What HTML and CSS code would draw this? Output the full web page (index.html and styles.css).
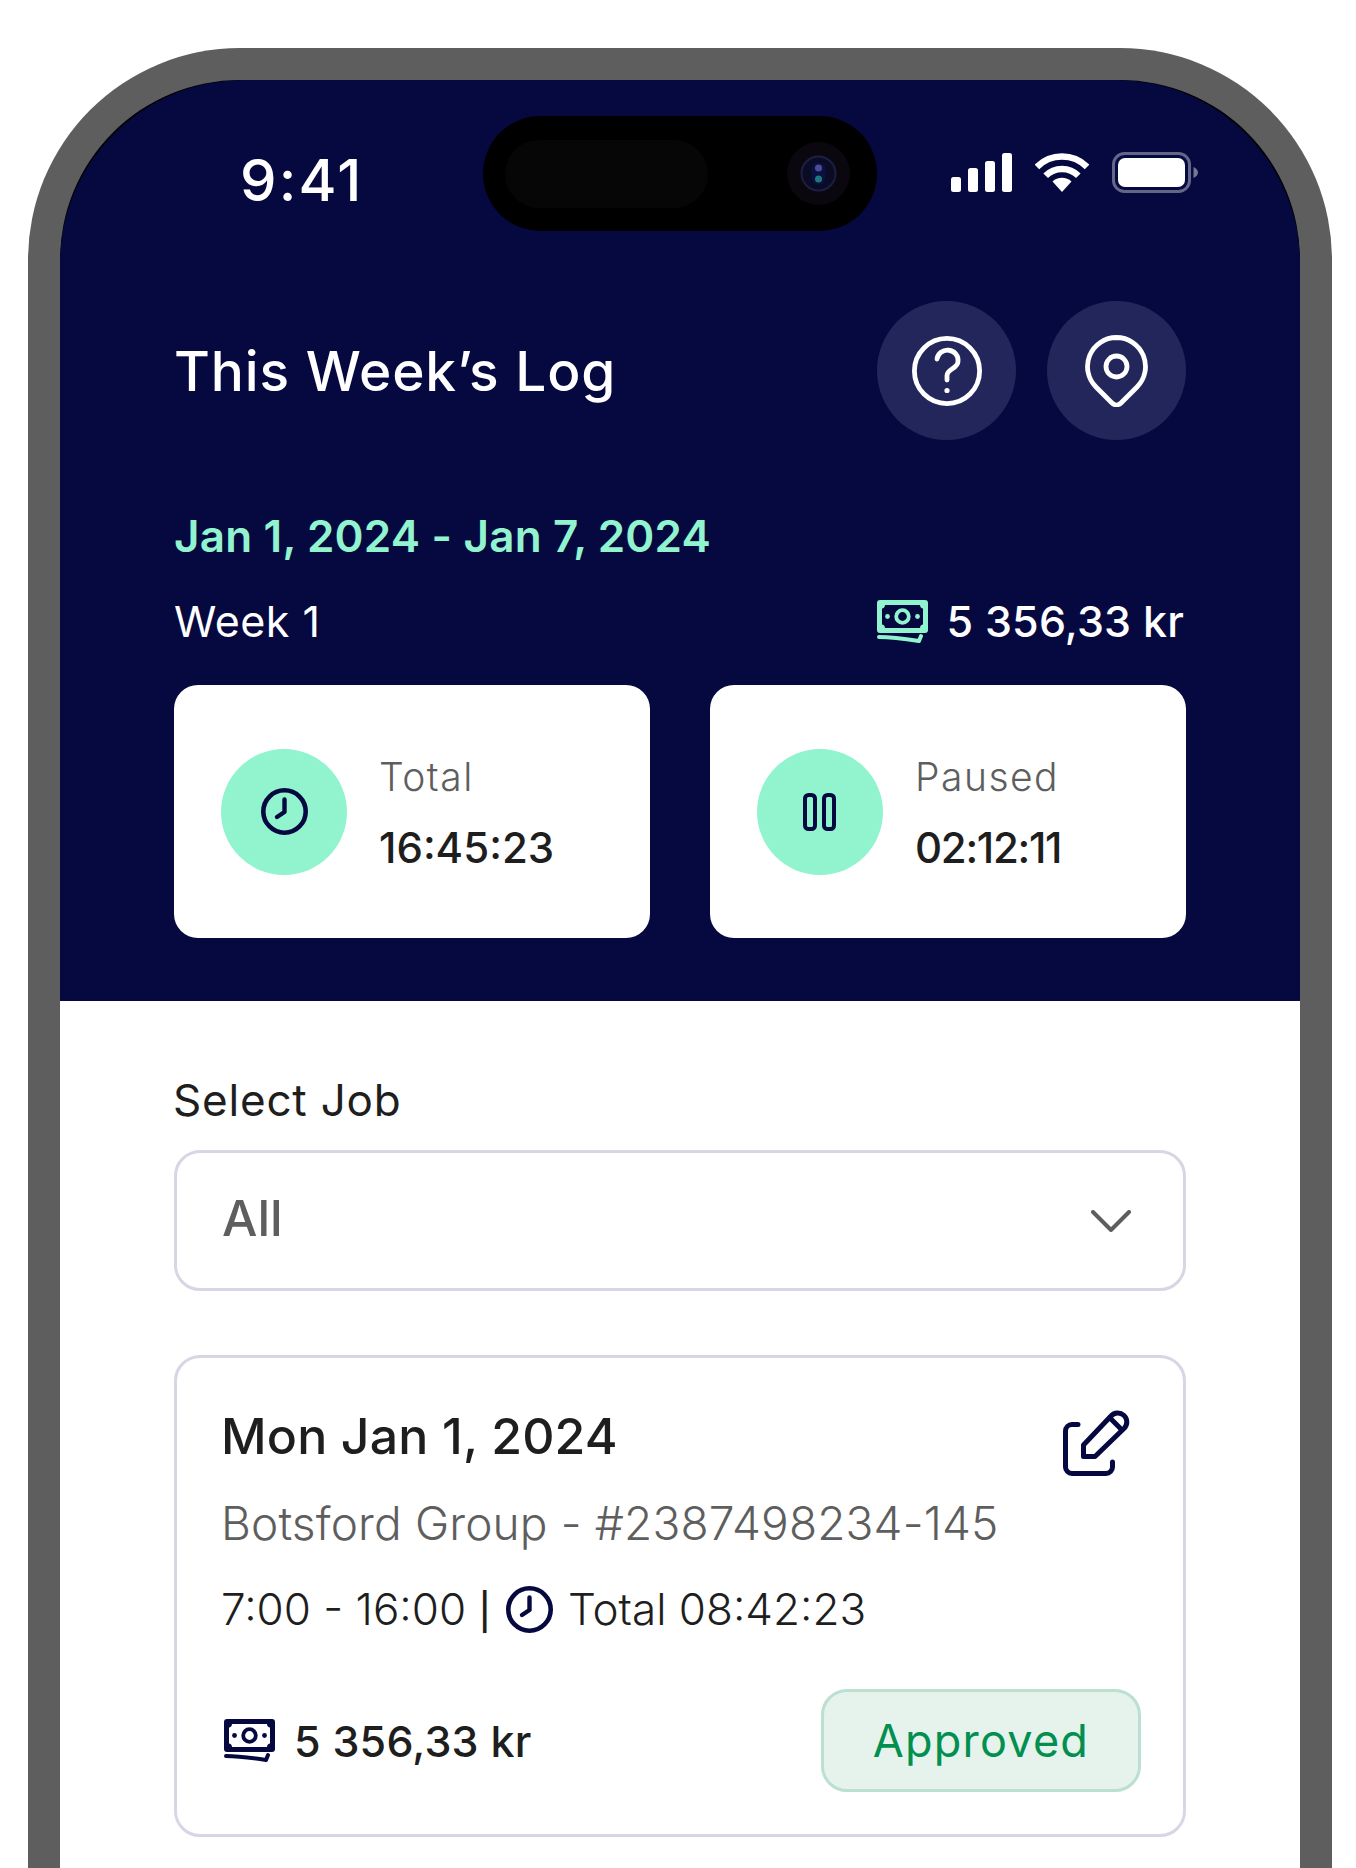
FILE: index.html
```html
<!DOCTYPE html>
<html lang="en">
<head>
<meta charset="utf-8">
<title>This Week's Log</title>
<link rel="stylesheet" href="styles.css">
</head>
<body>
<svg class="defs" width="0" height="0" aria-hidden="true">
  <symbol id="money" viewBox="0 0 51 43">
    <path fill="currentColor" fill-rule="evenodd" d="M3 0H48a3 3 0 0 1 3 3V30a3 3 0 0 1-3 3H3a3 3 0 0 1-3-3V3a3 3 0 0 1 3-3ZM8 5C8 7 6.500 8.500 5 8.500V24.500C6.500 24.500 8 26 8 28H43C43 26 44.500 24.500 46 24.500V8.500C44.500 8.500 43 7 43 5Z"/>
    <circle cx="25.500" cy="16.500" r="6.300" fill="none" stroke="currentColor" stroke-width="3.800"/>
    <circle cx="10.500" cy="16.500" r="2.400" fill="currentColor"/>
    <circle cx="40.500" cy="16.500" r="2.400" fill="currentColor"/>
    <path fill="none" stroke="currentColor" stroke-width="4" stroke-linecap="round" stroke-linejoin="round" d="M2 37C16 37 29 39 42 41L44 36"/>
  </symbol>
  <symbol id="clock" viewBox="0 0 47 47">
    <circle cx="23.500" cy="23.500" r="21.200" fill="none" stroke="currentColor" stroke-width="4.600"/>
    <path fill="none" stroke="currentColor" stroke-width="4.400" stroke-linecap="round" stroke-linejoin="round" d="M23.500 11.500V24L16 29"/>
  </symbol>
</svg>
<div class="phone">
  <div class="screen">
    <header class="hero">
      <div class="status">
        <div class="time">9:41</div>
        <div class="island">
          <div class="island-pill"></div>
          <svg class="camera" width="63" height="63" viewBox="0 0 63 63">
            <circle cx="31.500" cy="31.500" r="31.500" fill="#0b070f"/>
            <circle cx="31.500" cy="31.500" r="17" fill="#0a0c26" stroke="#1c1f42" stroke-width="2"/>
            <rect x="24.500" y="20.500" width="14" height="22" rx="7" fill="#0c1040"/>
            <circle cx="31.500" cy="26" r="3.500" fill="#4a4d96"/>
            <circle cx="31.500" cy="37" r="3.500" fill="#1c7a7c"/>
          </svg>
        </div>
        <div class="indicators">
          <svg width="61" height="39" viewBox="0 0 61 39"><g fill="#fff"><rect y="24" width="10" height="15" rx="2.500"/><rect x="17" y="15" width="10" height="24" rx="2.500"/><rect x="34" y="8" width="10" height="31" rx="2.500"/><rect x="51" width="10" height="39" rx="2.500"/></g></svg>
          <svg width="54" height="39" viewBox="0 0 54 39"><path fill="none" stroke="#fff" stroke-width="6.500" d="M1.900 13.900A35.500 35.500 0 0 1 52.100 13.900M10.700 22.700A23 23 0 0 1 43.300 22.700"/><path fill="#fff" d="M27 39L17.500 28.500A14 14 0 0 1 36.500 28.500Z"/></svg>
          <svg class="battery" width="86" height="41" viewBox="0 0 86 41"><rect x="1.500" y="1.500" width="76" height="38" rx="11" fill="none" stroke="#fff" stroke-opacity=".38" stroke-width="3"/><rect x="6" y="6" width="67" height="29" rx="7" fill="#fff"/><path fill="#fff" fill-opacity=".45" d="M81.500 15C84 16 86 18 86 20.500S84 25 81.500 26Z"/></svg>
        </div>
      </div>
      <div class="hero-body">
        <div class="title-row">
          <h1 class="title">This Week’s Log</h1>
          <div class="actions">
            <div class="round-btn">
              <svg width="70" height="70" viewBox="0 0 70 70" fill="none" stroke="#fff" stroke-width="4.800" stroke-linecap="round"><circle cx="35" cy="35" r="32.600"/><path d="M25 23a10.500 10 0 0 1 21 2.500c0 7-11 7.500-11 14v4.500"/><circle cx="35" cy="54.500" r="2.600" fill="#fff" stroke="none"/></svg>
            </div>
            <div class="round-btn">
              <svg width="63" height="72" viewBox="0 0 63 72" fill="none" stroke="#fff" stroke-width="4.800" stroke-linejoin="round"><path d="M31.500 2.500A29 29 0 0 1 52 52L36 68a6.400 6.400 0 0 1-9 0L11 52A29 29 0 0 1 31.500 2.500Z"/><circle cx="31.500" cy="31.500" r="10.500"/></svg>
            </div>
          </div>
        </div>
        <div class="dates">Jan 1, 2024 - Jan 7, 2024</div>
        <div class="week-row">
          <span class="week">Week 1</span>
          <span class="earn earn-light"><svg class="money" width="51" height="43"><use href="#money"/></svg><span>5 356,33 kr</span></span>
        </div>
        <div class="stats">
          <div class="stat">
            <div class="stat-icon"><svg width="47" height="47"><use href="#clock"/></svg></div>
            <div class="stat-text"><div class="stat-label">Total</div><div class="stat-value">16:45:23</div></div>
          </div>
          <div class="stat">
            <div class="stat-icon"><svg width="34" height="38" viewBox="0 0 34 38" fill="none" stroke="currentColor" stroke-width="4"><rect x="2" y="2" width="10" height="34" rx="3.500"/><rect x="21" y="2" width="10" height="34" rx="3.500"/></svg></div>
            <div class="stat-text"><div class="stat-label">Paused</div><div class="stat-value stat-value-tight">02:12:11</div></div>
          </div>
        </div>
      </div>
    </header>
    <main class="content">
      <div class="field-label">Select Job</div>
      <div class="select">
        <span class="select-value">All</span>
        <svg width="40" height="22" viewBox="0 0 40 22" fill="none" stroke="#5e5e5e" stroke-width="4" stroke-linecap="round" stroke-linejoin="round"><path d="M2 2L20 20L38 2"/></svg>
      </div>
      <article class="entry">
        <div class="entry-head">
          <h2 class="entry-date">Mon Jan 1, 2024</h2>
          <svg class="edit" width="68" height="67" viewBox="0 0 68 67" fill="none" stroke="currentColor" stroke-width="5" stroke-linecap="round" stroke-linejoin="round"><path d="M15 15.500H9a6.500 6.500 0 0 0-6.500 6.500V58a6.500 6.500 0 0 0 6.500 6.500H43a6.500 6.500 0 0 0 6.500-6.500V53"/><path d="M20.500 47.500V36L48 7A8.500 8.500 0 0 1 61.500 19L32 47.500Z"/><path d="M47 9L58.500 20.500"/></svg>
        </div>
        <div class="entry-job">Botsford Group - #2387498234-145</div>
        <div class="entry-time"><span>7:00 - 16:00 <span class="bar">|</span></span><svg class="entry-clock" width="47" height="47"><use href="#clock"/></svg><span>Total 08:42:23</span></div>
        <div class="entry-foot">
          <span class="earn earn-dark"><svg class="money" width="51" height="43"><use href="#money"/></svg><span>5 356,33 kr</span></span>
          <span class="badge">Approved</span>
        </div>
      </article>
    </main>
  </div>
</div>
</body>
</html>
```
FILE: styles.css
```css
* { box-sizing: border-box; }
html, body { margin: 0; padding: 0; }
body { background: #fff; height: 1868px; overflow: hidden; font-family: Inter, "Liberation Sans", sans-serif; color: #1e1e1e; }
.defs { position: absolute; }
h1, h2 { margin: 0; font: inherit; }

.phone { margin: 48px 24px 0 28px; height: 1820px; background: #000; border: 32px solid #5e5e5e; border-bottom: 0; border-radius: 212px 212px 0 0; }
.screen { height: 100%; display: flex; flex-direction: column; }

.hero { background: #060940; height: 921px; border-radius: 184px 184px 0 0; color: #fff; }
.status { display: grid; grid-template-columns: 423px 394px 1fr; padding-top: 36px; }
.time { padding: 30px 0 0 180px; font-size: 58px; line-height: 68px; font-weight: 500; letter-spacing: 2.2px; }
.island { height: 115px; border-radius: 58px; background: #000; display: flex; align-items: center; justify-content: space-between; padding: 0 27px 0 22px; }
.island-pill { width: 203px; height: 68px; border-radius: 34px; background: #060606; }
.indicators { display: flex; align-items: flex-start; gap: 23px; padding: 37px 0 0 74px; }
.battery { margin-top: -1px; }

.hero-body { padding: 70px 114px 0; }
.title-row { display: flex; justify-content: space-between; align-items: center; }
.title { font-size: 55px; font-weight: 500; line-height: 60px; letter-spacing: .9px; }
.actions { display: flex; gap: 31px; }
.round-btn { width: 139px; height: 139px; border-radius: 50%; background: #23265a; display: flex; align-items: center; justify-content: center; }
.dates { margin-top: 71px; font-size: 44px; line-height: 50px; font-weight: 600; letter-spacing: .2px; color: #92f4cf; }
.week-row { margin-top: 35px; height: 50px; display: flex; justify-content: space-between; align-items: center; font-size: 43px; letter-spacing: .5px; }
.earn { display: inline-flex; align-items: center; gap: 19px; font-size: 43px; font-weight: 500; letter-spacing: .2px; }
.earn-light { margin-right: 2px; }
.earn-light .money { color: #92f4cf; }
.earn-dark { margin-left: 3px; }
.earn-dark .money { color: #060940; }
.stats { margin-top: 39px; display: grid; grid-template-columns: 476px 476px; gap: 60px; }
.stat { height: 253px; border-radius: 24px; background: #fff; display: flex; align-items: center; gap: 32px; padding-left: 47px; color: #1e1e1e; }
.stat-icon { width: 126px; height: 126px; border-radius: 50%; background: #92f4cf; color: #060940; display: flex; align-items: center; justify-content: center; flex: none; }
.stat-text { padding-top: 4px; }
.stat-label { font-size: 39px; line-height: 46px; font-weight: 300; letter-spacing: 1.5px; color: #5e5e5e; }
.stat-value { margin-top: 23px; font-size: 42px; line-height: 50px; font-weight: 500; }
.stat-value-tight { letter-spacing: -1.3px; }

.content { flex: 1; background: #fff; padding: 74px 114px 0; }
.field-label { font-size: 44px; line-height: 50px; letter-spacing: .8px; margin-left: -1px; }
.select { margin-top: 25px; height: 141px; border: 3px solid #d6d6e4; border-radius: 26px; display: flex; align-items: center; justify-content: space-between; padding: 0 52px 0 45px; }
.select-value { font-size: 50px; font-weight: 500; color: #5e5e5e; margin-top: -6px; }
.entry { margin-top: 64px; height: 482px; border: 3px solid #d6d6e4; border-radius: 26px; padding: 48px 52px 0 44px; }
.entry-head { display: flex; justify-content: space-between; height: 60px; }
.entry-date { font-size: 50px; line-height: 60px; font-weight: 500; letter-spacing: .15px; }
.edit { margin-top: 3px; color: #060940; flex: none; }
.entry-job { margin-top: 29px; font-size: 46px; line-height: 56px; font-weight: 350; letter-spacing: .15px; color: #5e5e5e; }
.entry-time { margin-top: 30px; height: 56px; display: flex; align-items: center; gap: 15px; font-size: 44px; line-height: 56px; font-weight: 350; }
.bar { font-size: 36px; line-height: 1; font-weight: 500; }
.entry-clock { color: #060940; }
.entry-foot { margin-top: 52px; display: flex; justify-content: space-between; align-items: center; margin-right: -10px; }
.badge { width: 320px; height: 103px; border: 3px solid #bbe0d1; border-radius: 26px; background: #e5f3ec; color: #038f50; font-size: 45px; letter-spacing: 1.2px; display: flex; align-items: center; justify-content: center; }
```
